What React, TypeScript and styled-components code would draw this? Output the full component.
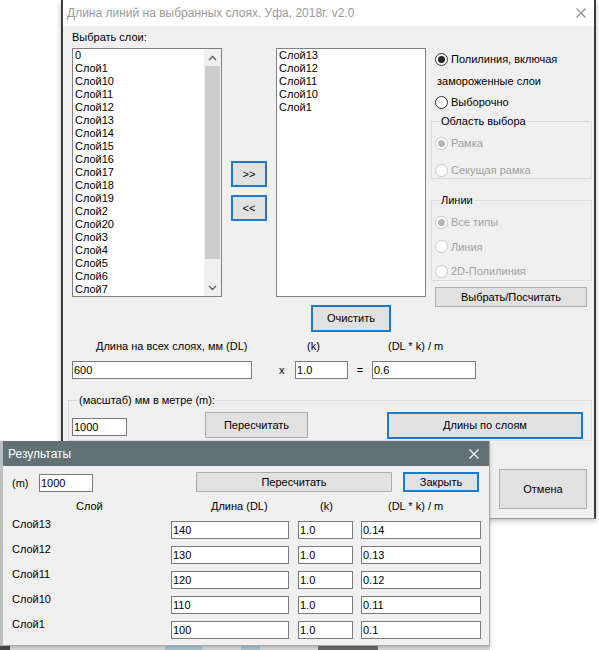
import React from 'react';
import styled, { createGlobalStyle } from 'styled-components';

const GlobalStyle = createGlobalStyle`
  html, body { margin: 0; padding: 0; background: #fff; }
  body { font-family: 'Liberation Sans', Arial, sans-serif; }
  * { box-sizing: border-box; }
`;

const Desktop = styled.div`
  position: relative;
  width: 599px;
  height: 650px;
  overflow: hidden;
  background: #fff;
  font-family: 'Liberation Sans', Arial, sans-serif;
  font-size: 11px;
  color: #000;
`;

const BackStrip = styled.div`
  position: absolute;
  left: 0;
  top: 645px;
  width: 490px;
  height: 5px;
  background: linear-gradient(
    to right,
    #4a4a4a 0, #4a4a4a 10px, #dcdfe0 10px, #dcdfe0 165px,
    #a9c9da 165px, #a9c9da 202px, #dcdfe0 202px, #dcdfe0 241px,
    #a9c9da 241px, #a9c9da 260px, #dcdfe0 260px, #dcdfe0 318px,
    #6a6a6a 318px, #6a6a6a 378px, #dcdfe0 378px
  );
`;

const MainWindow = styled.div`
  position: absolute;
  left: 61px;
  top: 0;
  width: 535px;
  height: 519px;
  background: #f0f0f0;
  border-left: 2px solid #3b3b3b;
  border-right: 2px solid #3b3b3b;
  border-bottom: 1px solid #9a9a9a;
  box-shadow: 0 2px 6px rgba(0, 0, 0, 0.25);
  display: flex;
  flex-direction: column;
`;

const TitleBar = styled.div<{ $dark?: boolean }>`
  flex: none;
  height: ${(p) => (p.$dark ? 25 : 26)}px;
  display: flex;
  align-items: center;
  justify-content: space-between;
  padding: ${(p) => (p.$dark ? '0 10px 0 5px' : '0 8px 0 4px')};
  background: ${(p) => (p.$dark ? '#627174' : '#ffffff')};
  color: ${(p) => (p.$dark ? '#ffffff' : '#9a9a9a')};
  font-size: 12px;
  white-space: nowrap;
`;

const CloseIcon = ({ color }: { color: string }) => (
  <svg width="10" height="10" viewBox="0 0 10 10">
    <path d="M0.5 0.5 L9.5 9.5 M9.5 0.5 L0.5 9.5" stroke={color} strokeWidth="1.1" fill="none" />
  </svg>
);

const MainBody = styled.div`
  flex: 1;
  display: flex;
  flex-direction: column;
  align-items: flex-start;
  padding: 5px 0 0 9px;
`;

const TopSection = styled.div`
  display: flex;
  align-items: flex-start;
`;

const Column = styled.div<{ $pt?: number; $ml?: number; $center?: boolean }>`
  display: flex;
  flex-direction: column;
  align-items: ${(p) => (p.$center ? 'center' : 'flex-start')};
  padding-top: ${(p) => p.$pt ?? 0}px;
  margin-left: ${(p) => p.$ml ?? 0}px;
`;

const Caption = styled.div`
  line-height: 13px;
  height: 13px;
  margin-bottom: 4px;
  white-space: nowrap;
`;

const ListBox = styled.div`
  width: 150px;
  height: 249px;
  background: #fff;
  border: 1px solid #828282;
  display: flex;
  overflow: hidden;
`;

const ListItems = styled.div`
  flex: 1;
  padding-left: 2px;
  display: flex;
  flex-direction: column;
`;

const ListItem = styled.div`
  height: 13px;
  line-height: 13px;
  white-space: nowrap;
`;

const ScrollBar = styled.div`
  width: 17px;
  background: #f0f0f0;
  display: flex;
  flex-direction: column;
`;

const ScrollArrow = styled.div`
  height: 17px;
  flex: none;
  display: flex;
  align-items: center;
  justify-content: center;
`;

const ScrollTrack = styled.div`
  flex: 1;
  padding: 0 1px;
`;

const ScrollThumb = styled.div`
  height: 193px;
  background: #cdcdcd;
`;

const Chevron = ({ up }: { up?: boolean }) => (
  <svg width="9" height="6" viewBox="0 0 9 6">
    <path
      d={up ? 'M1 5 L4.5 1.5 L8 5' : 'M1 1 L4.5 4.5 L8 1'}
      stroke="#606060"
      strokeWidth="1.4"
      fill="none"
    />
  </svg>
);

const WinButton = styled.button<{ $w: number; $h: number; $focus?: boolean; $ml?: number; $mt?: number }>`
  flex: none;
  width: ${(p) => p.$w}px;
  height: ${(p) => p.$h}px;
  margin: ${(p) => p.$mt ?? 0}px 0 0 ${(p) => p.$ml ?? 0}px;
  padding: 0;
  background: #e1e1e1;
  border: ${(p) => (p.$focus ? '2px solid #1a7bd0' : '1px solid #adadad')};
  font-family: 'Liberation Sans', Arial, sans-serif;
  font-size: 11px;
  color: #000;
  line-height: 13px;
  white-space: nowrap;
`;

const MoveButtons = styled.div`
  display: flex;
  flex-direction: column;
  gap: 8px;
  margin: 130px 0 0 9px;
`;

const RightPanel = styled.div`
  margin-left: 5px;
  width: 161px;
  padding-top: 18px;
  display: flex;
  flex-direction: column;
`;

const OptionRow = styled.div<{ $h?: number; $mt?: number; $pl?: number; $disabled?: boolean }>`
  display: flex;
  align-items: center;
  gap: 3px;
  height: ${(p) => p.$h ?? 16}px;
  margin-top: ${(p) => p.$mt ?? 0}px;
  padding-left: ${(p) => p.$pl ?? 0}px;
  color: ${(p) => (p.$disabled ? '#a0a0a0' : '#000')};
  white-space: nowrap;
`;

const RadioCircle = styled.span<{ $checked?: boolean; $disabled?: boolean }>`
  flex: none;
  width: 13px;
  height: 13px;
  border-radius: 50%;
  background: #fff;
  border: 1px solid ${(p) => (p.$disabled ? '#c8c8c8' : '#333')};
  display: flex;
  align-items: center;
  justify-content: center;
  &::after {
    content: '';
    display: ${(p) => (p.$checked ? 'block' : 'none')};
    width: 7px;
    height: 7px;
    border-radius: 50%;
    background: ${(p) => (p.$disabled ? '#b4b4b4' : '#222')};
  }
`;

const Radio = ({
  label,
  checked,
  disabled,
  h,
  mt,
  pl,
}: {
  label: string;
  checked?: boolean;
  disabled?: boolean;
  h?: number;
  mt?: number;
  pl?: number;
}) => (
  <OptionRow $h={h} $mt={mt} $pl={pl} $disabled={disabled}>
    <RadioCircle $checked={checked} $disabled={disabled} />
    <span>{label}</span>
  </OptionRow>
);

const GroupBox = styled.fieldset<{ $mt: number; $w: number; $ml?: number; $pad: string; $gap?: number }>`
  margin: ${(p) => p.$mt}px 0 0 ${(p) => p.$ml ?? 0}px;
  width: ${(p) => p.$w}px;
  padding: ${(p) => p.$pad};
  border: 1px solid #dcdcdc;
  min-width: 0;
  display: flex;
  flex-direction: column;
  gap: ${(p) => p.$gap ?? 0}px;
`;

const GroupLegend = styled.legend<{ $ml?: number }>`
  padding: 0 1px;
  margin-left: ${(p) => p.$ml ?? 5}px;
  font-size: 11px;
  line-height: 13px;
  color: #000;
  white-space: nowrap;
`;

const TextBox = styled.input<{ $w: number; $mt?: number }>`
  display: block;
  width: ${(p) => p.$w}px;
  height: 18px;
  margin: ${(p) => p.$mt ?? 0}px 0 0 0;
  padding: 0 1px;
  border: 1px solid #7a7a7a;
  background: #fff;
  font-family: 'Liberation Sans', Arial, sans-serif;
  font-size: 11px;
  color: #000;
  outline: none;
`;

const CalcGrid = styled.div`
  margin-top: 8px;
  display: grid;
  grid-template-columns: 180px 43px 53px 24px 104px;
  grid-template-rows: 13px 18px;
  row-gap: 8px;
  align-items: center;
`;

const GridLabel = styled.div<{ $col: number; $pl?: number; $center?: boolean }>`
  grid-column: ${(p) => p.$col};
  padding-left: ${(p) => p.$pl ?? 0}px;
  text-align: ${(p) => (p.$center ? 'center' : 'left')};
  line-height: 13px;
  white-space: nowrap;
`;

const ScaleRow = styled.div`
  display: flex;
  align-items: flex-start;
`;

const ResultsWindow = styled.div`
  position: absolute;
  left: 0;
  top: 441px;
  width: 490px;
  height: 205px;
  background: #f0f0f0;
  border-left: 3px solid #b9c0c2;
  border-right: 1px solid #a4aaac;
  border-bottom: 1px solid #a4aaac;
  box-shadow: 0 2px 4px rgba(0, 0, 0, 0.2);
  display: flex;
  flex-direction: column;
`;

const ResultsBody = styled.div`
  flex: 1;
  padding: 6px 0 0 9px;
  display: flex;
  flex-direction: column;
`;

const ResultsTop = styled.div`
  display: flex;
  align-items: flex-end;
  height: 20px;
`;

const MLabel = styled.div`
  width: 27px;
  line-height: 18px;
  height: 18px;
`;

const ResultsGrid = styled.div`
  margin-top: 8px;
  display: grid;
  grid-template-columns: 159px 127px 63px 120px;
  grid-template-rows: 14px repeat(5, 18px);
  row-gap: 7px;
`;

const HeadCell = styled.div<{ $pl: number }>`
  padding-left: ${(p) => p.$pl}px;
  line-height: 13px;
  white-space: nowrap;
`;

const RowLabel = styled.div`
  margin-top: -3px;
  line-height: 13px;
  white-space: nowrap;
  align-self: start;
`;

const leftLayers = [
  '0', 'Слой1', 'Слой10', 'Слой11', 'Слой12', 'Слой13', 'Слой14', 'Слой15', 'Слой16',
  'Слой17', 'Слой18', 'Слой19', 'Слой2', 'Слой20', 'Слой3', 'Слой4', 'Слой5', 'Слой6', 'Слой7',
];
const rightLayers = ['Слой13', 'Слой12', 'Слой11', 'Слой10', 'Слой1'];

const results = [
  { name: 'Слой13', dl: '140', k: '1.0', r: '0.14' },
  { name: 'Слой12', dl: '130', k: '1.0', r: '0.13' },
  { name: 'Слой11', dl: '120', k: '1.0', r: '0.12' },
  { name: 'Слой10', dl: '110', k: '1.0', r: '0.11' },
  { name: 'Слой1', dl: '100', k: '1.0', r: '0.1' },
];

export default function App() {
  return (
    <Desktop>
      <GlobalStyle />
      <BackStrip />
      <MainWindow>
        <TitleBar>
          <span>Длина линий на выбранных слоях. Уфа, 2018г. v2.0</span>
          <CloseIcon color="#8a8a8a" />
        </TitleBar>
        <MainBody>
          <TopSection>
            <Column>
              <Caption>Выбрать слои:</Caption>
              <ListBox>
                <ListItems>
                  {leftLayers.map((l) => (
                    <ListItem key={l}>{l}</ListItem>
                  ))}
                </ListItems>
                <ScrollBar>
                  <ScrollArrow>
                    <Chevron up />
                  </ScrollArrow>
                  <ScrollTrack>
                    <ScrollThumb />
                  </ScrollTrack>
                  <ScrollArrow>
                    <Chevron />
                  </ScrollArrow>
                </ScrollBar>
              </ListBox>
            </Column>
            <MoveButtons>
              <WinButton $w={36} $h={26} $focus>
                &gt;&gt;
              </WinButton>
              <WinButton $w={36} $h={26} $focus>
                &lt;&lt;
              </WinButton>
            </MoveButtons>
            <Column $pt={17} $ml={9} $center>
              <ListBox>
                <ListItems>
                  {rightLayers.map((l) => (
                    <ListItem key={l}>{l}</ListItem>
                  ))}
                </ListItems>
              </ListBox>
              <WinButton $w={80} $h={27} $mt={8} $focus>
                Очистить
              </WinButton>
            </Column>
            <RightPanel>
              <Radio label="Полилиния, включая" checked h={20} pl={4} />
              <OptionRow $h={20} $mt={2} $pl={6}>
                замороженные слои
              </OptionRow>
              <Radio label="Выборочно" h={20} mt={1} pl={4} />
              <GroupBox $mt={3} $w={161} $pad="7px 0 0 3px" $gap={11}>
                <GroupLegend>Область выбора</GroupLegend>
                <Radio label="Рамка" checked disabled />
                <Radio label="Секущая рамка" disabled />
              </GroupBox>
              <GroupBox $mt={15} $w={161} $pad="7px 0 1px 3px" $gap={8.5}>
                <GroupLegend>Линии</GroupLegend>
                <Radio label="Все типы" checked disabled />
                <Radio label="Линия" disabled />
                <Radio label="2D-Полилиния" disabled />
              </GroupBox>
              <WinButton $w={152} $h={20} $mt={6} $ml={4}>
                Выбрать/Посчитать
              </WinButton>
            </RightPanel>
          </TopSection>

          <CalcGrid>
            <GridLabel $col={1} $pl={24}>
              Длина на всех слоях, мм (DL)
            </GridLabel>
            <GridLabel $col={3} $pl={12}>
              (k)
            </GridLabel>
            <GridLabel $col={5} $pl={16}>
              (DL * k) / m
            </GridLabel>
            <TextBox $w={180} readOnly value="600" />
            <GridLabel $col={2} $pl={27}>
              x
            </GridLabel>
            <TextBox $w={53} readOnly value="1.0" />
            <GridLabel $col={4} $center>
              =
            </GridLabel>
            <TextBox $w={104} readOnly value="0.6" />
          </CalcGrid>

          <GroupBox $mt={15} $ml={-4} $w={524} $pad="5px 0 1px 3px">
            <GroupLegend $ml={6}>(масштаб) мм в метре (m):</GroupLegend>
            <ScaleRow>
              <TextBox $w={55} $mt={6} readOnly value="1000" />
              <WinButton $w={103} $h={26} $ml={78}>
                Пересчитать
              </WinButton>
              <WinButton $w={196} $h={27} $ml={79} $focus>
                Длины по слоям
              </WinButton>
            </ScaleRow>
          </GroupBox>

          <WinButton $w={88} $h={40} $mt={28} $ml={427}>
            Отмена
          </WinButton>
        </MainBody>
      </MainWindow>

      <ResultsWindow>
        <TitleBar $dark>
          <span>Результаты</span>
          <CloseIcon color="#ffffff" />
        </TitleBar>
        <ResultsBody>
          <ResultsTop>
            <MLabel>(m)</MLabel>
            <TextBox $w={54} readOnly value="1000" />
            <WinButton $w={196} $h={20} $ml={103}>
              Пересчитать
            </WinButton>
            <WinButton $w={76} $h={20} $ml={11} $focus>
              Закрыть
            </WinButton>
          </ResultsTop>
          <ResultsGrid>
            <HeadCell $pl={64}>Слой</HeadCell>
            <HeadCell $pl={40}>Длина (DL)</HeadCell>
            <HeadCell $pl={22}>(k)</HeadCell>
            <HeadCell $pl={27}>(DL * k) / m</HeadCell>
            {results.map((r) => (
              <React.Fragment key={r.name}>
                <RowLabel>{r.name}</RowLabel>
                <TextBox $w={118} readOnly value={r.dl} />
                <TextBox $w={55} readOnly value={r.k} />
                <TextBox $w={120} readOnly value={r.r} />
              </React.Fragment>
            ))}
          </ResultsGrid>
        </ResultsBody>
      </ResultsWindow>
    </Desktop>
  );
}
